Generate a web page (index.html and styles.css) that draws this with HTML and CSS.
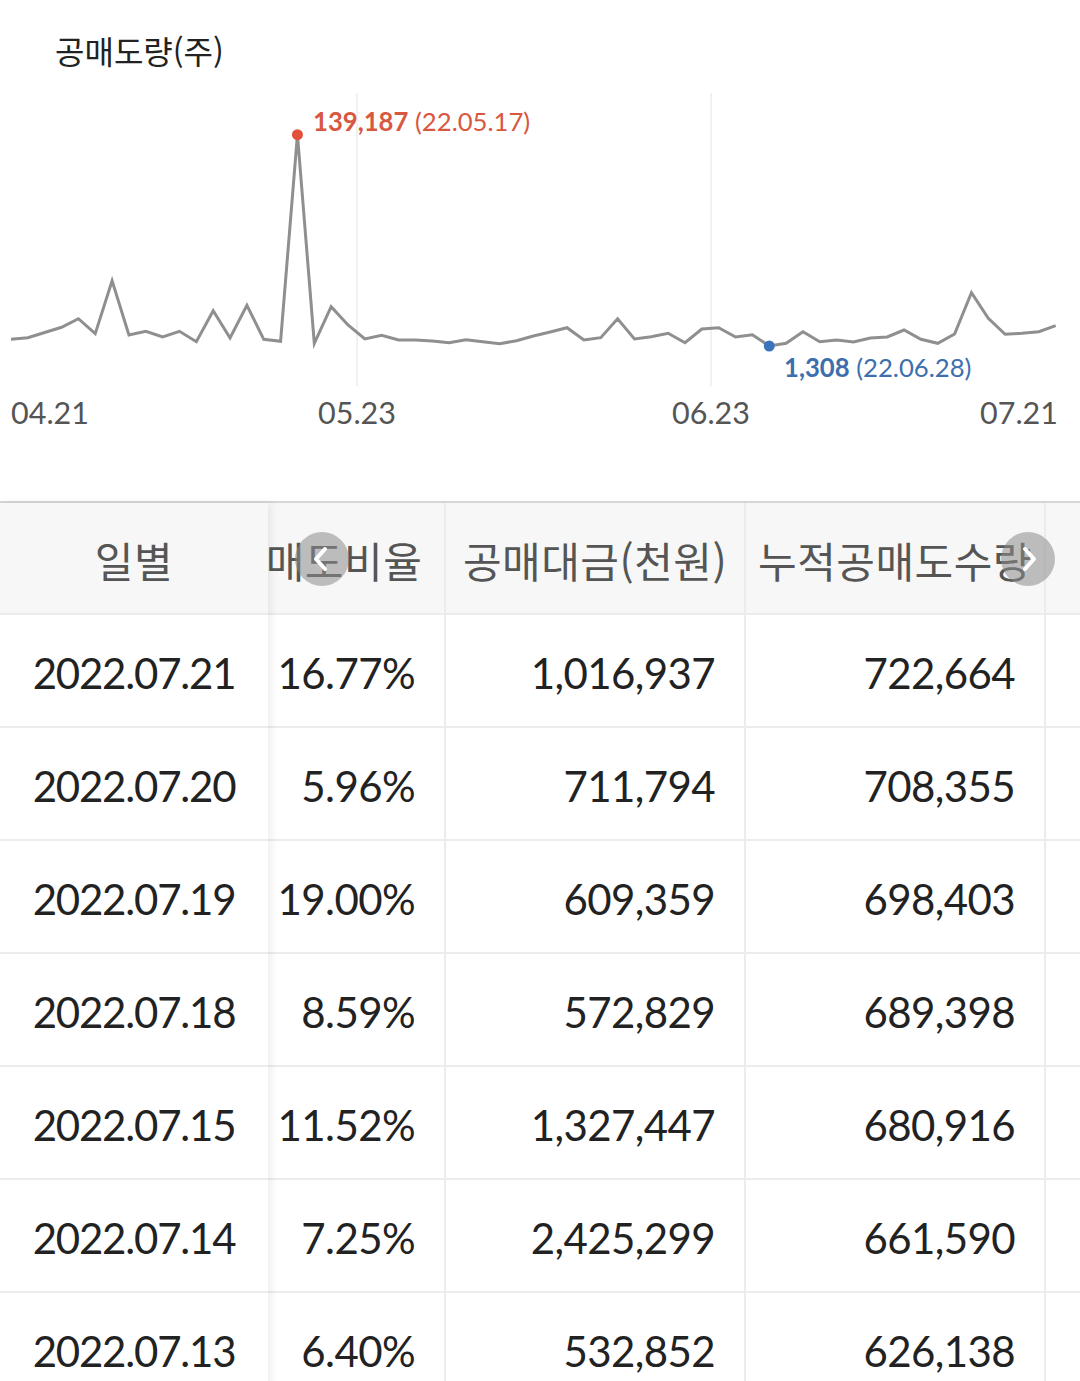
FILE: index.html
```html
<!DOCTYPE html>
<html lang="ko">
<head>
<meta charset="utf-8">
<title>공매도량</title>
<link rel="stylesheet" href="styles.css">
</head>
<body>
<section class="chart">
  <h2 class="chart-title">공매도량(주)</h2>
  <svg class="chart-svg" viewBox="0 90 1080 411" width="1080" height="411">
    <line class="gridline" x1="357" y1="93" x2="357" y2="386"/>
    <line class="gridline" x1="711" y1="93" x2="711" y2="386"/>
    <polyline class="series" points="11,339.3 27.85,337.7 44.7,332.5 61.55,327.3 78.4,318.7 95.25,333.7 112.1,280.7 128.95,335 145.8,331.3 162.65,337 179.5,331.3 196.35,341.7 213.2,310.7 230.05,338 246.9,305.3 263.75,339.3 280.6,341.3 297.45,134.7 314.3,343.3 331.15,306.7 348,325 364.85,339 381.7,335.3 398.55,340 415.4,340 432.25,341 449.1,342.7 465.95,339.7 482.8,341.7 499.65,343.7 516.5,340.7 533.35,336 550.2,332 567.05,327.7 583.9,340 600.75,337.7 617.6,318.7 634.45,339 651.3,336.7 668.15,333.3 685,342.7 701.85,329 718.7,327.7 735.55,337 752.4,334.7 769.25,346 786.1,343.3 802.95,331.7 819.8,341.7 836.65,340 853.5,342 870.35,338 887.2,337 904.05,330 920.9,339.3 937.75,343.3 954.6,334 971.45,292.7 988.3,318.3 1005.15,334.3 1022,333.3 1038.85,331.7 1055.7,325.7"/>
    <circle class="dot-max" cx="297.45" cy="134.7" r="5.5"/>
    <text class="lbl lbl-max" x="313" y="131"><tspan class="strong">139,187</tspan> (22.05.17)</text>
    <circle class="dot-min" cx="769.25" cy="346" r="5.5"/>
    <text class="lbl lbl-min" x="784" y="377"><tspan class="strong">1,308</tspan> (22.06.28)</text>
    <text class="axis" x="11" y="424">04.21</text>
    <text class="axis" x="357" y="424" text-anchor="middle">05.23</text>
    <text class="axis" x="711" y="424" text-anchor="middle">06.23</text>
    <text class="axis" x="1058" y="424" text-anchor="end">07.21</text>
  </svg>
</section>

<section class="table">
  <div class="fixed-col">
    <div class="cell head">일별</div>
    <div class="cell">2022.07.21</div>
    <div class="cell">2022.07.20</div>
    <div class="cell">2022.07.19</div>
    <div class="cell">2022.07.18</div>
    <div class="cell">2022.07.15</div>
    <div class="cell">2022.07.14</div>
    <div class="cell">2022.07.13</div>
  </div>
  <div class="scroll">
    <div class="grid">
      <div class="cell head">매도비율</div>
      <div class="cell head">공매대금(천원)</div>
      <div class="cell head">누적공매도수량</div>
      <div class="cell head"></div>

      <div class="cell">16.77%</div><div class="cell">1,016,937</div><div class="cell">722,664</div><div class="cell"></div>
      <div class="cell">5.96%</div><div class="cell">711,794</div><div class="cell">708,355</div><div class="cell"></div>
      <div class="cell">19.00%</div><div class="cell">609,359</div><div class="cell">698,403</div><div class="cell"></div>
      <div class="cell">8.59%</div><div class="cell">572,829</div><div class="cell">689,398</div><div class="cell"></div>
      <div class="cell">11.52%</div><div class="cell">1,327,447</div><div class="cell">680,916</div><div class="cell"></div>
      <div class="cell">7.25%</div><div class="cell">2,425,299</div><div class="cell">661,590</div><div class="cell"></div>
      <div class="cell">6.40%</div><div class="cell">532,852</div><div class="cell">626,138</div><div class="cell"></div>
    </div>
  </div>
  <button class="nav prev" aria-label="이전">
    <svg viewBox="0 0 30 30" width="30" height="30"><path d="M18 5 L9 15 L18 25"/></svg>
  </button>
  <button class="nav next" aria-label="다음">
    <svg viewBox="0 0 30 30" width="30" height="30"><path d="M12 5 L21 15 L12 25"/></svg>
  </button>
</section>
</body>
</html>
```

FILE: styles.css
```css
html, body {
  margin: 0;
  padding: 0;
  background: #fff;
}

body {
  width: 1080px;
  height: 1381px;
  overflow: hidden;
  font-family: Lato, "Noto Sans CJK KR", sans-serif;
}

.chart {
  height: 501px;
}

.chart-title {
  margin: 0;
  box-sizing: border-box;
  height: 90px;
  padding: 10px 0 0 55px;
  display: flex;
  align-items: center;
  font: 400 32px "Noto Sans CJK KR", sans-serif;
  color: #222;
}

.chart-svg {
  display: block;
}

.gridline {
  stroke: #ececec;
  stroke-width: 1.5;
}

.series {
  fill: none;
  stroke: #8f8f8f;
  stroke-width: 3;
  stroke-linejoin: miter;
}

.dot-max { fill: #e2513a; }
.dot-min { fill: #3a74bd; }

.lbl {
  font-family: Lato, sans-serif;
  font-size: 25.7px;
}

.lbl .strong { font-weight: 700; }

.lbl-max { fill: #d8573f; }
.lbl-min { fill: #3d6fae; }

.axis {
  font-family: Lato, sans-serif;
  font-size: 30.5px;
  fill: #555;
}

/* table */
.table {
  position: relative;
  display: flex;
  border-top: 2px solid #d6d6d6;
}

.fixed-col {
  flex: none;
  width: 268px;
  position: relative;
  z-index: 2;
  background: #fff;
  box-shadow: 3px 0 8px rgba(0, 0, 0, 0.07);
}

.scroll {
  flex: 1;
  overflow: hidden;
}

.grid {
  display: grid;
  grid-template-columns: 202px 300px 300px 300px;
  margin-left: -24px;
}

.cell {
  box-sizing: border-box;
  height: 113px;
  padding-top: 5px;
  border-bottom: 2px solid #ececec;
  display: flex;
  align-items: center;
  font-family: Lato, sans-serif;
  font-size: 42px;
  letter-spacing: -0.6px;
  color: #222;
  white-space: nowrap;
}

.fixed-col .cell {
  justify-content: center;
  letter-spacing: -1.2px;
}

.grid .cell {
  border-right: 2px solid #ececec;
  justify-content: flex-end;
  padding-right: 29px;
}

.cell.head,
.fixed-col .cell.head {
  height: 112px;
  padding-top: 2px;
  background: #f7f7f7;
  font-family: "Noto Sans CJK KR", sans-serif;
  font-size: 42px;
  letter-spacing: 0.5px;
  color: #555;
  justify-content: center;
}

.grid .cell.head {
  padding-right: 0;
}

.nav {
  position: absolute;
  top: 29px;
  width: 54px;
  height: 54px;
  padding: 0;
  border: none;
  border-radius: 50%;
  background: rgba(140, 140, 140, 0.55);
  display: flex;
  align-items: center;
  justify-content: center;
  z-index: 3;
}

.nav.prev { left: 295px; }
.nav.next { left: 1001px; }

.nav svg path {
  fill: none;
  stroke: #fff;
  stroke-width: 4;
  stroke-linecap: round;
  stroke-linejoin: round;
}
```
